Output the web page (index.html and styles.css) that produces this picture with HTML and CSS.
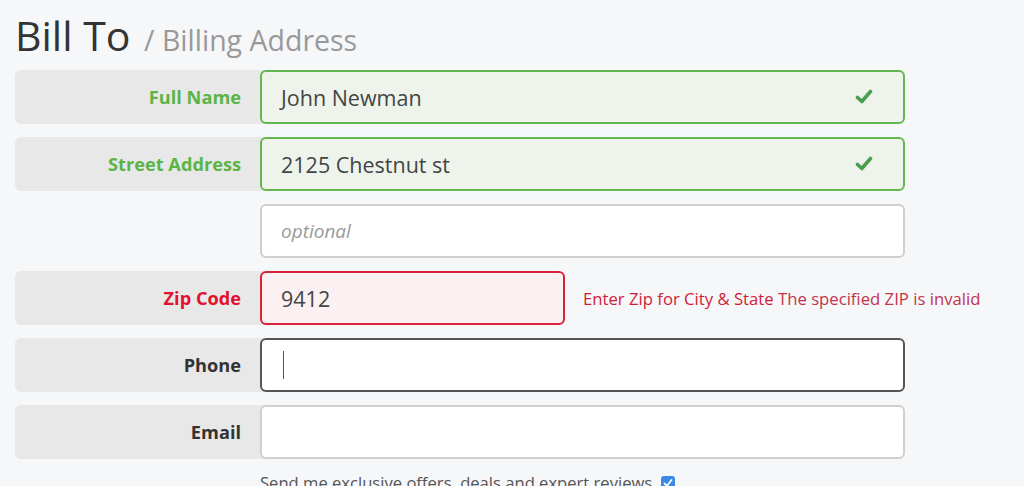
FILE: index.html
```html
<!DOCTYPE html>
<html>
<head>
<meta charset="utf-8">
<link rel="stylesheet" href="styles.css">
</head>
<body>
<div class="page">
  <h1 class="title">Bill To <span class="sub">/ Billing Address</span></h1>
  <div class="form">
    <div class="row">
      <div class="label valid">Full Name</div>
      <div class="field valid"><span class="value">John Newman</span>
        <svg class="check" width="18" height="16" viewBox="0 0 18 16"><path d="M2.5 8.5 L6.8 12.5 L15.5 2.5" fill="none" stroke="#4a9e4c" stroke-width="3.6" stroke-linecap="round" stroke-linejoin="round"/></svg>
      </div>
    </div>
    <div class="row">
      <div class="label valid">Street Address</div>
      <div class="field valid"><span class="value">2125 Chestnut st</span>
        <svg class="check" width="18" height="16" viewBox="0 0 18 16"><path d="M2.5 8.5 L6.8 12.5 L15.5 2.5" fill="none" stroke="#4a9e4c" stroke-width="3.6" stroke-linecap="round" stroke-linejoin="round"/></svg>
      </div>
    </div>
    <div class="row">
      <div class="label empty"></div>
      <div class="field"><span class="placeholder">optional</span></div>
    </div>
    <div class="row">
      <div class="label invalid">Zip Code</div>
      <div class="field invalid short"><span class="value">9412</span></div>
      <div class="error"><span class="err-main">Enter Zip for City &amp; State</span> <span class="err-sub">The specified ZIP is invalid</span></div>
    </div>
    <div class="row">
      <div class="label">Phone</div>
      <div class="field focus"><span class="caret"></span></div>
    </div>
    <div class="row">
      <div class="label">Email</div>
      <div class="field"></div>
    </div>
    <div class="optin">Send me exclusive offers, deals and expert reviews <span class="box"><svg width="14" height="14" viewBox="0 0 14 14"><path d="M3.5 7.5 L6 10 L10.5 4" fill="none" stroke="#fff" stroke-width="1.8" stroke-linecap="round" stroke-linejoin="round"/></svg></span></div>
  </div>
</div>
</body>
</html>
```
FILE: styles.css
```css
html, body {
  margin: 0;
  padding: 0;
  background: #f6f7f9;
  font-family: "Open Sans", "Liberation Sans", sans-serif;
}
.page {
  padding: 11px 0 0 15px;
  height: 486px;
  box-sizing: border-box;
  overflow: hidden;
}
.title {
  margin: 0 0 11px 0;
  height: 48px;
  font-size: 41px;
  line-height: 48px;
  font-weight: 400;
  color: #333;
  white-space: nowrap;
}
.sub {
  font-size: 28.5px;
  line-height: 1;
  color: #999;
  margin-left: 3px;
}
.form {
  display: flex;
  flex-direction: column;
  gap: 13px;
}
.row {
  display: flex;
  align-items: center;
  height: 54px;
}
.label {
  width: 249px;
  height: 54px;
  box-sizing: border-box;
  padding-right: 23px;
  background: #e8e8e8;
  border-radius: 6px 0 0 6px;
  display: flex;
  align-items: center;
  justify-content: flex-end;
  font-size: 18.2px;
  font-weight: 700;
  color: #333;
}
.label.empty { background: transparent; }
.label.valid { color: #5cb447; }
.label.invalid { color: #e0122f; }
.field {
  margin-left: -4px;
  width: 645px;
  height: 54px;
  box-sizing: border-box;
  border: 2px solid #cfcfcf;
  border-radius: 6px;
  background: #fff;
  display: flex;
  align-items: center;
  padding: 0 30px 0 19px;
  font-size: 21.5px;
  color: #444;
}
.field.valid {
  border-color: #65b64e;
  background: #eef4ec;
}
.field.invalid {
  border-color: #d9223c;
  background: #fbf1f2;
}
.field.short { width: 305px; }
.field.focus { border-color: #555; }
.value { flex: 1; }
.placeholder {
  font-style: italic;
  color: #9a9a9a;
  font-size: 19px;
}
.caret {
  width: 1px;
  height: 28px;
  background: #555;
  margin-left: 2px;
}
.error {
  margin-left: 18px;
  font-size: 16.7px;
  color: #d11b37;
  white-space: nowrap;
}
.err-sub { color: #c3334c; }
.optin {
  margin-left: 245px;
  margin-top: 0;
  font-size: 16.6px;
  line-height: 22px;
  color: #555;
  display: flex;
  align-items: center;
  gap: 9px;
  white-space: nowrap;
}
.box {
  width: 14px;
  height: 14px;
  border-radius: 3px;
  background: #3b8ae2;
  display: inline-flex;
}
```
